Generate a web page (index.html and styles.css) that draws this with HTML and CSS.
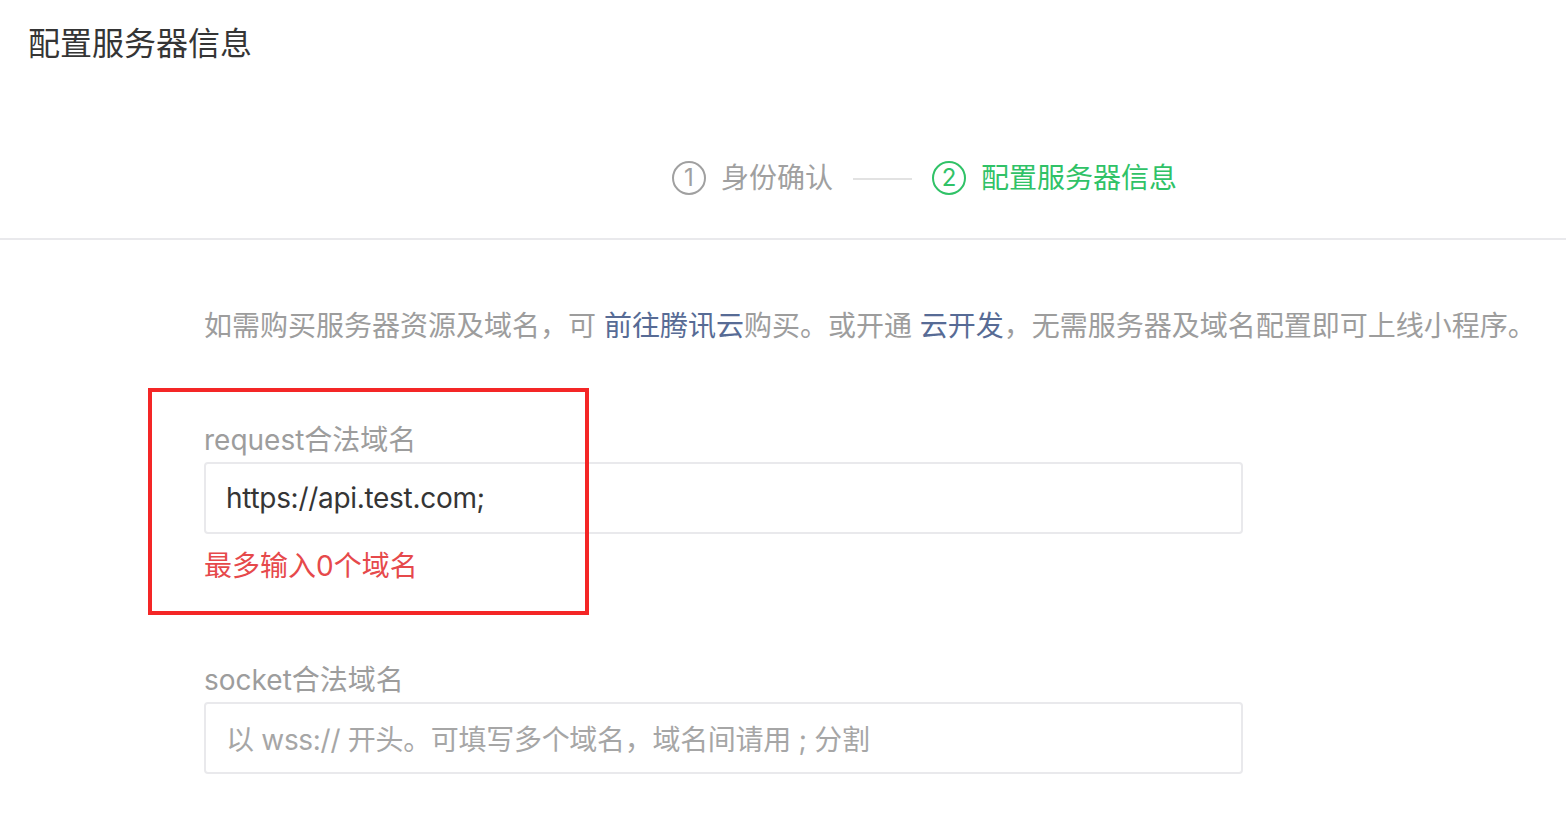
FILE: index.html
```html
<!DOCTYPE html>
<html lang="zh-CN">
<head>
<meta charset="utf-8">
<title>配置服务器信息</title>
<link rel="stylesheet" href="styles.css">
</head>
<body>
<div class="page">
  <div class="header">
    <h1 class="title">配置服务器信息</h1>
  </div>
  <div class="steps">
    <div class="step">
      <span class="step-num">1</span>
      <span class="step-text">身份确认</span>
    </div>
    <span class="step-line"></span>
    <div class="step step-active">
      <span class="step-num">2</span>
      <span class="step-text">配置服务器信息</span>
    </div>
  </div>
  <div class="content">
    <p class="desc">如需购买服务器资源及域名，可 <a class="link">前往腾讯云</a>购买。或开通 <a class="link">云开发</a>，无需服务器及域名配置即可上线小程序。</p>
    <div class="field field-first">
      <div class="annot"></div>
      <div class="label">request合法域名</div>
      <div class="input">https://api.test.com;</div>
      <div class="error">最多输入0个域名</div>
    </div>
    <div class="field">
      <div class="label">socket合法域名</div>
      <div class="input placeholder">以 wss:// 开头。可填写多个域名，域名间请用 ; 分割</div>
    </div>
  </div>
</div>
</body>
</html>
```

FILE: styles.css
```css
html, body {
  margin: 0;
  padding: 0;
  background: #ffffff;
}

body {
  font-family: "Inter", "Noto Sans CJK SC", sans-serif;
  color: #353535;
}

.page {
  width: 1566px;
}

.header {
  height: 90px;
  box-sizing: border-box;
  padding: 22px 28px 0;
}

.title {
  margin: 0;
  font-size: 32px;
  line-height: 44px;
  font-weight: 400;
  color: #353535;
}

.steps {
  height: 150px;
  box-sizing: border-box;
  padding: 27px 0 0 672px;
  display: flex;
  align-items: center;
  border-bottom: 2px solid #e9e9ec;
}

.step {
  display: flex;
  align-items: center;
  gap: 15px;
  color: #a0a0a0;
}

.step-num {
  width: 30px;
  height: 30px;
  border: 2px solid #a0a0a0;
  border-radius: 50%;
  display: flex;
  align-items: center;
  justify-content: center;
  font-size: 24px;
  line-height: 1;
}

.step-text {
  font-size: 28px;
  line-height: 40px;
}

.step-active {
  color: #30c267;
}

.step-active .step-num {
  border-color: #30c267;
}

.step-line {
  width: 59px;
  height: 2px;
  margin: 2px 20px 0 20px;
  background: #e2e2e2;
}

.content {
  padding-left: 204px;
}

.desc {
  margin: 66px 0 0;
  font-size: 28px;
  line-height: 40px;
  color: #9d9d9d;
  white-space: nowrap;
}

.link {
  color: #576b95;
  text-decoration: none;
}

.field {
  position: relative;
  margin-top: 74px;
  width: 1039px;
}

.annot {
  position: absolute;
  left: -56px;
  top: -32px;
  width: 441px;
  height: 227px;
  box-sizing: border-box;
  border: 4px solid #f42626;
  pointer-events: none;
}

.label {
  font-size: 28px;
  line-height: 40px;
  color: #9d9d9d;
}

.input {
  margin-top: 2px;
  height: 72px;
  box-sizing: border-box;
  border: 2px solid #e9e9ec;
  border-radius: 4px;
  padding: 0 20px;
  display: flex;
  align-items: center;
  font-size: 28px;
  letter-spacing: -0.3px;
  color: #353535;
}

.placeholder {
  color: #a6a6a6;
}

.error {
  margin-top: 12px;
  font-size: 28px;
  line-height: 40px;
  color: #e6494b;
}
```
